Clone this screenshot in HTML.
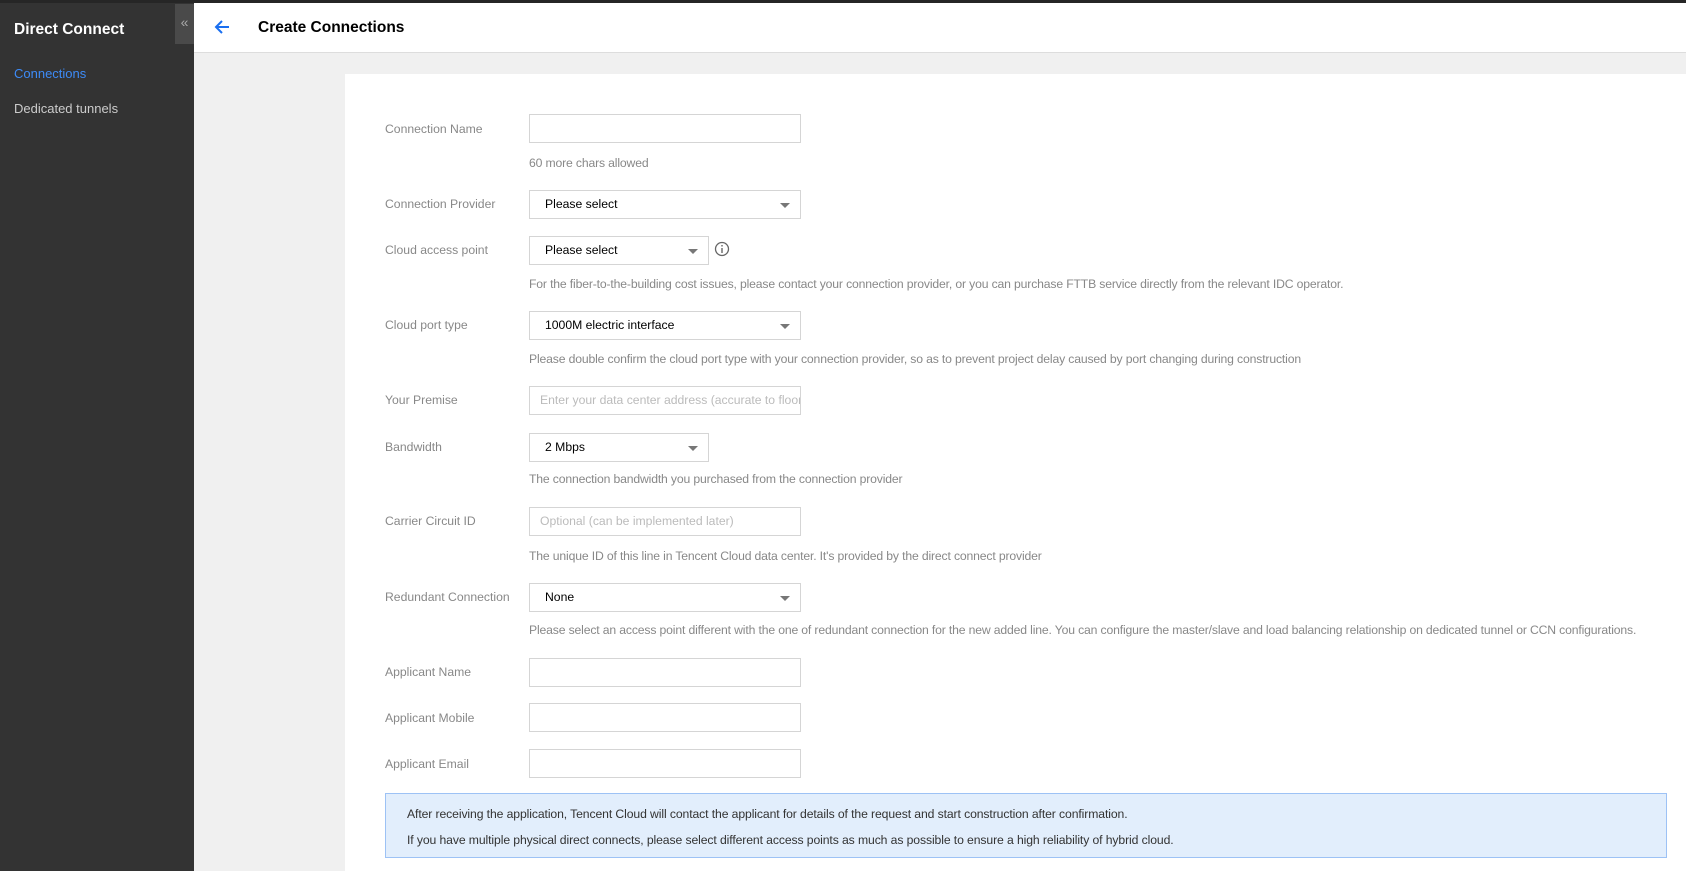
<!DOCTYPE html>
<html><head><style>
*{margin:0;padding:0;box-sizing:border-box}
body{width:1686px;height:871px;overflow:hidden;background:#f0f0f0;font-family:"Liberation Sans",sans-serif;font-size:12.2px;position:relative}
.topbar{position:absolute;left:0;top:0;width:1686px;height:3px;background:#262626}
.side{position:absolute;left:0;top:3px;width:194px;height:868px;background:#333}
.side .t{position:absolute;left:14px;top:18px;color:#fff;font-weight:bold;font-size:15.5px}
.side .a{position:absolute;left:14px;top:63px;color:#3d8bf7;font-size:13px}
.side .b{position:absolute;left:14px;top:98px;color:#ccc;font-size:13px}
.col{position:absolute;left:175px;top:4px;width:19px;height:40px;background:#4a4a4a;color:#aaa;font-size:14px;text-align:center;line-height:36px}
.hdr{position:absolute;left:194px;top:3px;width:1492px;height:50px;background:#fff;border-bottom:1px solid #ddd}
.hdr .tt{position:absolute;left:64px;top:16px;font-weight:bold;font-size:15.5px;color:#000}
.card{position:absolute;left:345px;top:74px;width:1341px;height:797px;background:#fff}
.l{position:absolute;left:385px;color:#888}
.i{position:absolute;left:529px;width:272px;height:29px;border:1px solid #d5d5d5;background:#fff;padding-left:15px;line-height:27px;color:#000}
.i.s{width:180px}
.i.p{color:#bbb;padding-left:10px;overflow:hidden;white-space:nowrap}
.i .ar{position:absolute;right:10px;top:12px;width:0;height:0;border-left:5px solid transparent;border-right:5px solid transparent;border-top:5px solid #777}
.h{position:absolute;left:529px;color:#888;white-space:nowrap;letter-spacing:-0.15px}
.info{position:absolute;left:385px;top:793px;width:1282px;height:65px;background:#e2eefc;border:1px solid #9dc2f5;color:#333;letter-spacing:-0.1px}
.info div{position:absolute;left:21px}
</style></head><body>
<div class="topbar"></div>
<div class="side"><div class="t">Direct Connect</div><div class="a">Connections</div><div class="b">Dedicated tunnels</div></div>
<div class="col">«</div>
<div class="hdr">
<svg style="position:absolute;left:20px;top:16px" width="16" height="16" viewBox="0 0 16 16"><path d="M15 8H2M8 2L2 8l6 6" stroke="#1a6ff0" stroke-width="2" fill="none"/></svg>
<div class="tt">Create Connections</div></div>
<div class="card"></div>

<div class="l" style="top:122px">Connection Name</div>
<div class="i" style="top:114px"></div>
<div class="h" style="top:156px">60 more chars allowed</div>

<div class="l" style="top:197px">Connection Provider</div>
<div class="i" style="top:190px">Please select<span class="ar"></span></div>

<div class="l" style="top:243px">Cloud access point</div>
<div class="i s" style="top:236px">Please select<span class="ar"></span></div>
<svg style="position:absolute;left:714px;top:241px" width="16" height="16" viewBox="0 0 16 16"><circle cx="8" cy="8" r="6.5" stroke="#666" stroke-width="1.3" fill="none"/><rect x="7.3" y="7" width="1.4" height="5" fill="#666"/><rect x="7.3" y="4" width="1.4" height="1.5" fill="#666"/></svg>
<div class="h" style="top:277px">For the fiber-to-the-building cost issues, please contact your connection provider, or you can purchase FTTB service directly from the relevant IDC operator.</div>

<div class="l" style="top:318px">Cloud port type</div>
<div class="i" style="top:311px">1000M electric interface<span class="ar"></span></div>
<div class="h" style="top:352px">Please double confirm the cloud port type with your connection provider, so as to prevent project delay caused by port changing during construction</div>

<div class="l" style="top:393px">Your Premise</div>
<div class="i p" style="top:386px">Enter your data center address (accurate to floor)</div>

<div class="l" style="top:440px">Bandwidth</div>
<div class="i s" style="top:433px">2 Mbps<span class="ar"></span></div>
<div class="h" style="top:472px">The connection bandwidth you purchased from the connection provider</div>

<div class="l" style="top:514px">Carrier Circuit ID</div>
<div class="i p" style="top:507px">Optional (can be implemented later)</div>
<div class="h" style="top:549px">The unique ID of this line in Tencent Cloud data center. It's provided by the direct connect provider</div>

<div class="l" style="top:590px">Redundant Connection</div>
<div class="i" style="top:583px">None<span class="ar"></span></div>
<div class="h" style="top:623px">Please select an access point different with the one of redundant connection for the new added line. You can configure the master/slave and load balancing relationship on dedicated tunnel or CCN configurations.</div>

<div class="l" style="top:665px">Applicant Name</div>
<div class="i" style="top:658px"></div>
<div class="l" style="top:711px">Applicant Mobile</div>
<div class="i" style="top:703px"></div>
<div class="l" style="top:757px">Applicant Email</div>
<div class="i" style="top:749px"></div>

<div class="info">
<div style="top:13px">After receiving the application, Tencent Cloud will contact the applicant for details of the request and start construction after confirmation.</div>
<div style="top:39px">If you have multiple physical direct connects, please select different access points as much as possible to ensure a high reliability of hybrid cloud.</div>
</div>
</body></html>
